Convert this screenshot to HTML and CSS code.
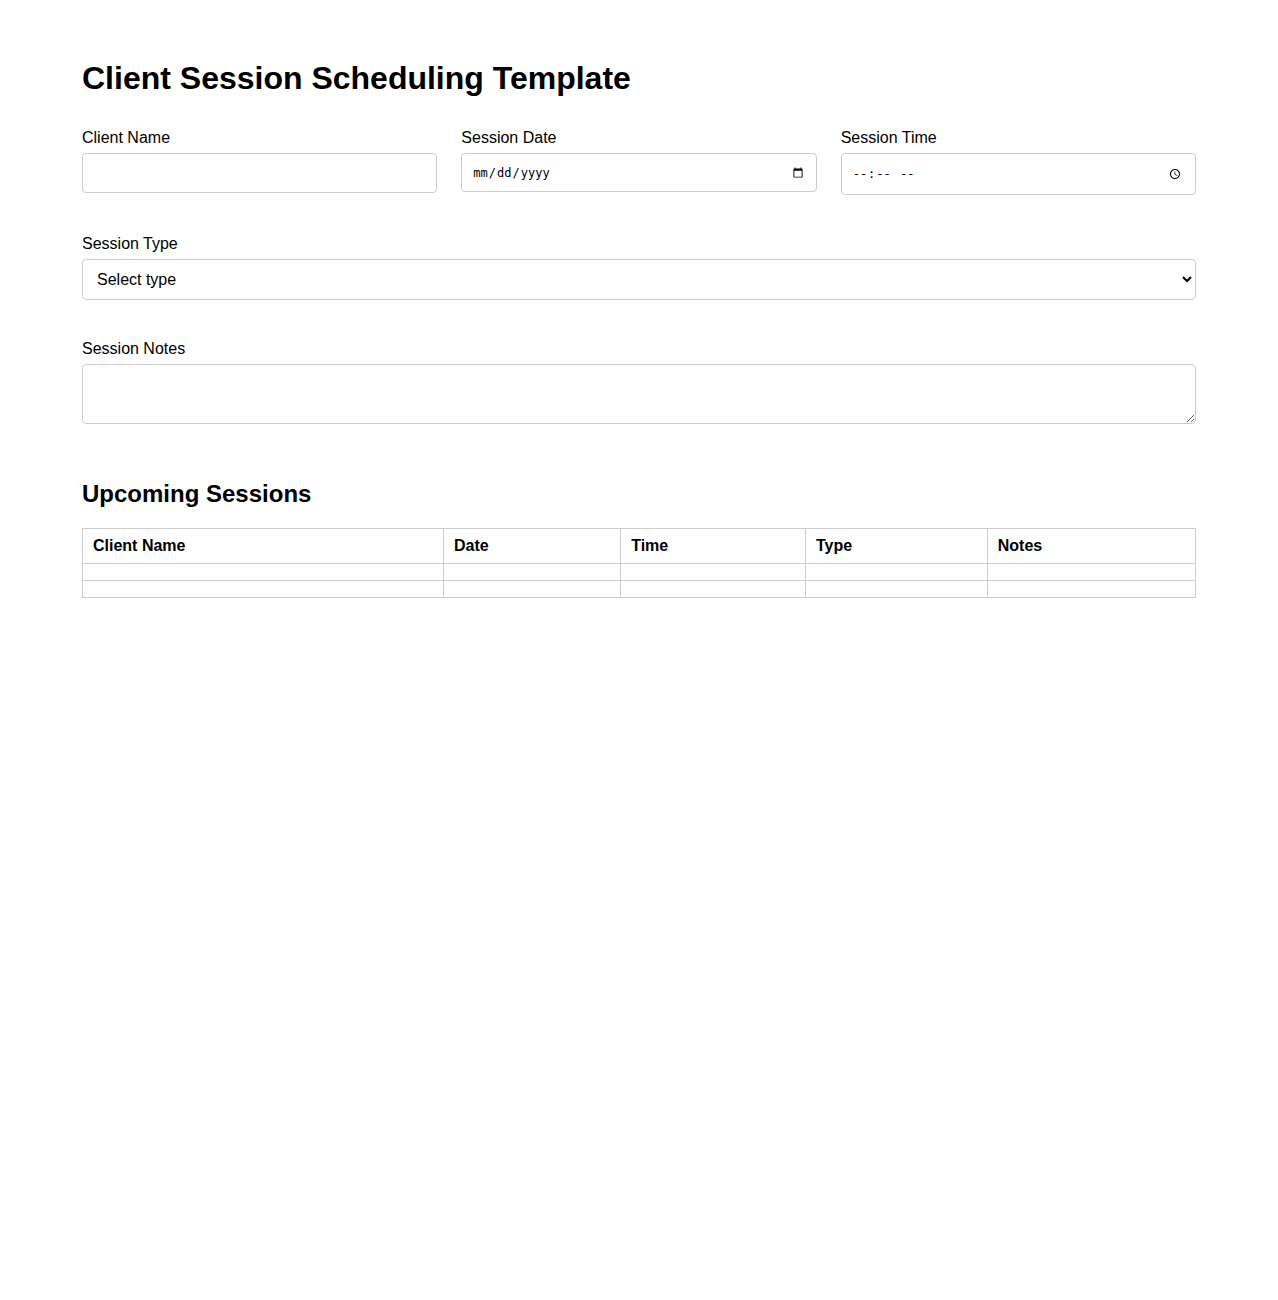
FILE: index.html
```html
<!DOCTYPE html>
<html lang="en">
<head>
    <meta charset="UTF-8">
    <meta name="viewport" content="width=device-width, initial-scale=1.0">
    <title>Client Session Scheduling Template</title>
    <link rel="stylesheet" href="styles.css">
</head>
<body>
    <div class="container">
        <h1>Client Session Scheduling Template</h1>

        <!-- Session form -->
        <form class="session-form">
            <div class="form-row">
                <div class="form-group">
                    <label for="client-name">Client Name</label>
                    <input type="text" id="client-name">
                </div>
                <div class="form-group">
                    <label for="session-date">Session Date</label>
                    <input type="date" id="session-date">
                </div>
                <div class="form-group">
                    <label for="session-time">Session Time</label>
                    <input type="time" id="session-time">
                </div>
            </div>

            <div class="form-group">
                <label for="session-type">Session Type</label>
                <select id="session-type">
                    <option value="">Select type</option>
                    <option value="individual">Individual</option>
                    <option value="group">Group</option>
                    <option value="online">Online</option>
                </select>
            </div>

            <div class="form-group">
                <label for="session-notes">Session Notes</label>
                <textarea id="session-notes" rows="3"></textarea>
            </div>
        </form>

        <!-- Sessions table -->
        <h2>Upcoming Sessions</h2>
        <table class="sessions">
            <thead>
                <tr>
                    <th>Client Name</th>
                    <th>Date</th>
                    <th>Time</th>
                    <th>Type</th>
                    <th>Notes</th>
                </tr>
            </thead>
            <tbody>
                <tr><td></td><td></td><td></td><td></td><td></td></tr>
                <tr><td></td><td></td><td></td><td></td><td></td></tr>
            </tbody>
        </table>
    </div>
</body>
</html>
```

FILE: styles.css
```css
body {
    font-family: 'Liberation Sans', Arial, sans-serif;
    margin: 0;
    padding: 40px 82px;
    color: #000;
    background: #fff;
}

.container {
    max-width: 1114px;
    margin: 0 auto;
}

h1 {
    font-size: 32px;
    margin: 20px 0 32px;
}

.form-row {
    display: grid;
    grid-template-columns: repeat(3, 1fr);
    gap: 24px;
}

.form-group {
    margin-bottom: 40px;
}

.form-group label {
    display: block;
    font-size: 16px;
    margin-bottom: 6px;
}

.form-group input,
.form-group select,
.form-group textarea {
    width: 100%;
    padding: 10px;
    border: 1px solid #ccc;
    border-radius: 4px;
    box-sizing: border-box;
    background: #fff;
    color: #000;
}

.form-group input[type="text"],
.form-group select {
    font-size: 16px;
}

.form-group input[type="date"] {
    font-size: 12px;
    height: 39px;
}

.form-group input[type="time"] {
    font-size: 12px;
    height: 42px;
}

.form-group textarea {
    display: block;
    height: 60px;
}

h2 {
    font-size: 24px;
    margin: 56px 0 20px;
}

.sessions {
    width: 100%;
    border-collapse: collapse;
}

.sessions th,
.sessions td {
    border: 1px solid #ccc;
    padding: 8px 10px;
    text-align: left;
    font-size: 16px;
}
```
